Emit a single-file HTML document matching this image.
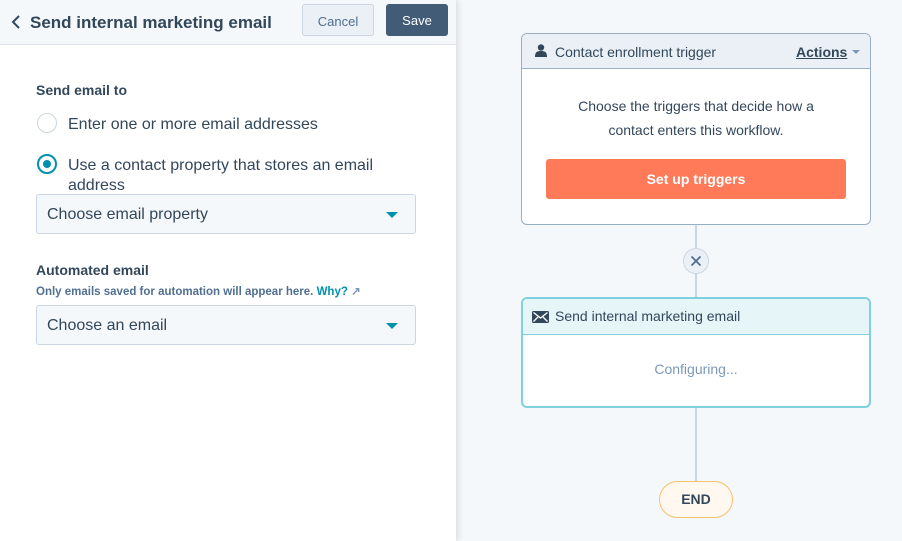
<!DOCTYPE html>
<html><head><style>
*{box-sizing:border-box;margin:0;padding:0}
body{width:902px;height:541px;overflow:hidden;font-family:"Liberation Sans",sans-serif;color:#33475b;background:#f5f8fa;position:relative}
.panel{position:absolute;left:0;top:0;width:456px;height:541px;background:#fff;box-shadow:2px 0 6px rgba(45,62,80,.15)}
.hdr{height:45px;background:#f5f8fa;border-bottom:1px solid #dfe3eb;position:relative}
.hdr .t{position:absolute;left:30px;top:12px;font-size:17px;font-weight:bold}
.btn{position:absolute;top:4px;height:32px;border-radius:3px;font-size:13px;text-align:center;line-height:32px}
.lbl{position:absolute;font-size:14px;font-weight:bold}
.radio{position:absolute;left:37px;width:20px;height:20px;border-radius:50%;border:1px solid #cbd6e2;background:#fff}
.rt{position:absolute;left:68px;font-size:16px;line-height:20px}
.sel{position:absolute;left:36px;width:380px;height:40px;border:1px solid #cbd6e2;border-radius:3px;background:#f5f8fa;font-size:16px;padding:10px 10px;line-height:19px}
.sel:after{content:"";position:absolute;right:17px;top:17px;border-left:6px solid transparent;border-right:6px solid transparent;border-top:6px solid #0091ae}
.card{position:absolute;left:521px;width:350px;background:#fff;border:1px solid #99afc4;border-radius:6px;overflow:hidden}
.line{position:absolute;left:695px;width:2px;background:#cbd6e2}
</style></head><body>
<div class="line" style="top:224px;height:74px"></div>
<div class="line" style="top:406px;height:76px"></div>
<div class="card" style="top:33px;height:192px">
 <div style="height:35px;background:#eaf0f6;border-bottom:1px solid #99afc4;position:relative">
  <svg style="position:absolute;left:13px;top:10px" width="12" height="13" viewBox="0 0 12 13"><circle cx="6" cy="3.5" r="3.2" fill="#33475b"/><path d="M0 13 C0 8 2 7 6 7 C10 7 12 8 12 13Z" fill="#33475b"/></svg>
  <span style="position:absolute;left:33px;top:10px;font-size:14px">Contact enrollment trigger</span>
  <span style="position:absolute;left:274px;top:10px;font-size:14px;font-weight:bold;text-decoration:underline">Actions</span>
  <span style="position:absolute;left:330px;top:16px;border-left:4px solid transparent;border-right:4px solid transparent;border-top:4px solid #7c98b6"></span>
 </div>
 <div style="text-align:center;font-size:14px;line-height:24px;margin-top:25px">Choose the triggers that decide how a<br>contact enters this workflow.</div>
 <div style="position:absolute;left:24px;top:125px;width:300px;height:40px;background:#ff7a59;border-radius:3px;color:#fff;font-weight:bold;font-size:14px;text-align:center;line-height:40px">Set up triggers</div>
</div>
<div style="position:absolute;left:683px;top:248px;width:26px;height:26px;border-radius:50%;background:#eaf0f6;border:1px solid #cbd6e2"><svg width="24" height="24" viewBox="0 0 24 24"><path d="M7.5 7.5L16.5 16.5M16.5 7.5L7.5 16.5" stroke="#516f90" stroke-width="1.8"/></svg></div>
<div class="card" style="top:297px;height:111px;border:2px solid #7fd1de">
 <div style="height:36px;background:#e5f5f8;border-bottom:1px solid #7fd1de;position:relative">
  <svg style="position:absolute;left:9px;top:12px" width="17" height="12" viewBox="0 0 17 12"><rect width="17" height="12" rx="1.5" fill="#33475b"/><path d="M1.5 1.5L8.5 7L15.5 1.5M1.5 10.5L6 6M15.5 10.5L11 6" stroke="#fff" stroke-width="1.3" fill="none"/></svg>
  <span style="position:absolute;left:32px;top:9px;font-size:14px">Send internal marketing email</span>
 </div>
 <div style="text-align:center;font-size:14px;color:#7c98b6;margin-top:26px">Configuring...</div>
</div>
<div style="position:absolute;left:659px;top:481px;width:74px;height:37px;border-radius:19px;background:#fef8f0;border:1px solid #f5c26b;text-align:center;line-height:35px;font-weight:bold;font-size:14px">END</div>

<div class="panel">
 <div class="hdr">
  <svg style="position:absolute;left:11px;top:14px" width="10" height="16" viewBox="0 0 10 16"><path d="M8 2L2 8L8 14" stroke="#33475b" stroke-width="2" fill="none"/></svg>
  <div class="t" style="top:13px">Send internal marketing email</div>
  <div class="btn" style="left:302px;width:72px;background:#eaf0f6;border:1px solid #cbd6e2;color:#506e91;line-height:34px">Cancel</div>
  <div class="btn" style="left:386px;width:62px;background:#425b76;color:#fff;line-height:34px">Save</div>
 </div>
 <div class="lbl" style="left:36px;top:82px">Send email to</div>
 <div class="radio" style="top:113px"></div>
 <div class="rt" style="top:115px">Enter one or more email addresses</div>
 <div class="radio" style="top:154px;border:2px solid #0091ae"><div style="position:absolute;left:4px;top:4px;width:8px;height:8px;border-radius:50%;background:#0091ae"></div></div>
 <div class="rt" style="top:156px">Use a contact property that stores an email<br>address</div>
 <div class="sel" style="top:194px">Choose email property</div>
 <div class="lbl" style="left:36px;top:262px">Automated email</div>
 <div style="position:absolute;left:36px;top:284px;font-size:11.5px;font-weight:bold;color:#516f90">Only emails saved for automation will appear here. <span style="color:#0091ae">Why?</span> <span style="color:#7c98b6">↗</span></div>
 <div class="sel" style="top:305px">Choose an email</div>
</div>
</body></html>
